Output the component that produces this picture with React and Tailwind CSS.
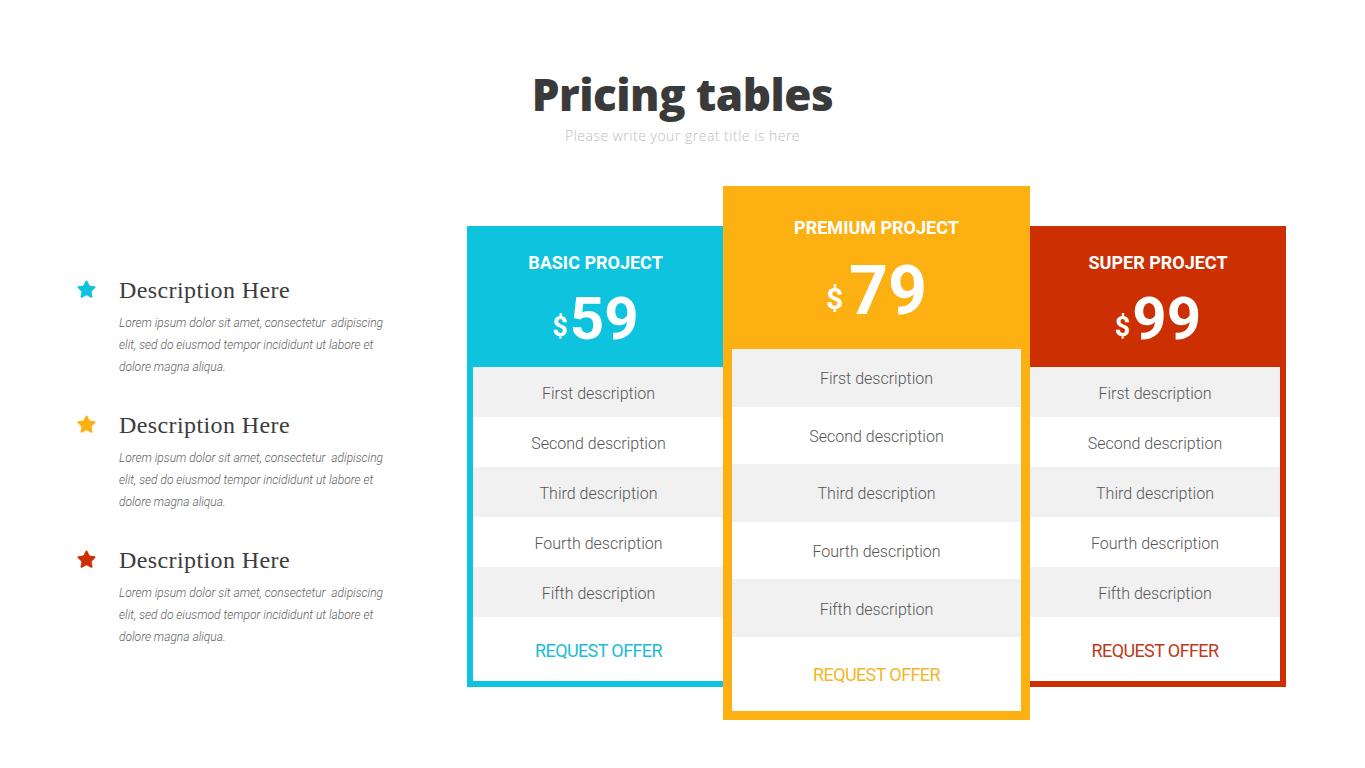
import React from "react";
import { Star } from "lucide-react";

const points = [
  { color: "#0ec3de" },
  { color: "#fdb012" },
  { color: "#cc2f02" },
];

const rows = ["First description", "Second description", "Third description", "Fourth description", "Fifth description"];

const Feature = ({ color }) => (
  <div className="flex items-start">
    <Star className="w-[21px] h-[21px] mt-[1px]" style={{ color, fill: color }} strokeWidth={1} />
    <div className="ml-[22px]">
      <h3 className="text-[24px] leading-[24px] text-[#3c3c3c] font-['Liberation_Serif',serif] tracking-[0.4px]">
        Description Here
      </h3>
      <p className="mt-[10px] text-[12px] leading-[22px] italic font-light text-[#5e5e5e] font-['Roboto',sans-serif]">
        Lorem ipsum dolor sit amet, consectetur&nbsp; adipiscing
        <br />
        elit, sed do eiusmod tempor incididunt ut labore et
        <br />
        dolore magna aliqua.
      </p>
    </div>
  </div>
);

export default function App() {
  return (
    <div className="w-[1365px] h-[768px] bg-white overflow-hidden font-['Roboto',sans-serif]">
      {/* Heading */}
      <div className="pt-[66px] text-center">
        <h1 className="text-[44px] leading-[56px] font-extrabold text-[#3a3a3a] font-['Open_Sans',sans-serif] tracking-[-0.5px]">
          Pricing tables
        </h1>
        <p className="mt-[5px] text-[14px] leading-[18px] font-light text-[#bdbdbd] font-['Open_Sans',sans-serif] tracking-[0.5px]">
          Please write your great title is here
        </p>
      </div>

      <div className="flex mt-[41px]">
        {/* Left features */}
        <div className="w-[467px] pl-[76px] pt-[92px] flex flex-col gap-[35px]">
          {points.map((p, i) => (
            <Feature key={i} color={p.color} />
          ))}
        </div>

        {/* Basic */}
        <div className="w-[257px] mt-[40px] h-[461px] bg-[#0ec3de] pl-[6px] pb-[6px] flex flex-col">
          <div className="h-[141px] flex flex-col items-center text-white -ml-[6px]">
            <div className="mt-[26px] text-[18px] leading-[22px] font-bold">BASIC PROJECT</div>
            <div className="mt-[15px] flex items-end font-bold">
              <span className="text-[27px] leading-[27px] mb-[8px] mr-[2px]">$</span>
              <span className="text-[60px] leading-[60px]">59</span>
            </div>
          </div>
          {rows.map((r, i) => (
            <div
              key={r}
              className={`h-[50px] pt-[3px] flex items-center justify-center text-[16px] font-light text-[#555] ${i % 2 === 0 ? "bg-[#f1f1f1]" : "bg-white"}`}
            >
              {r}
            </div>
          ))}
          <div className="flex-1 pt-[2px] bg-white flex items-center justify-center text-[18px] text-[#1cbcd6] tracking-[-0.6px]">
            REQUEST OFFER
          </div>
        </div>

        {/* Premium */}
        <div className="w-[307px] h-[534px] bg-[#fdb012] px-[9px] pb-[9px] -ml-[1px] flex flex-col">
          <div className="h-[163px] flex flex-col items-center text-white">
            <div className="mt-[31px] text-[18px] leading-[22px] font-bold">PREMIUM PROJECT</div>
            <div className="mt-[18px] flex items-end font-bold">
              <span className="text-[30px] leading-[30px] mb-[11px] mr-[6px]">$</span>
              <span className="text-[68px] leading-[68px]">79</span>
            </div>
          </div>
          {rows.map((r, i) => (
            <div
              key={r}
              className={`h-[57.6px] pt-[3px] flex items-center justify-center text-[16px] font-light text-[#555] ${i % 2 === 0 ? "bg-[#f1f1f1]" : "bg-white"}`}
            >
              {r}
            </div>
          ))}
          <div className="flex-1 pt-[2px] bg-white flex items-center justify-center text-[18px] text-[#f2b62a] tracking-[-0.6px]">
            REQUEST OFFER
          </div>
        </div>

        {/* Super */}
        <div className="w-[256px] mt-[40px] h-[461px] bg-[#cc2f02] pr-[6px] pb-[6px] flex flex-col">
          <div className="h-[141px] flex flex-col items-center text-white -mr-[6px]">
            <div className="mt-[26px] text-[18px] leading-[22px] font-bold">SUPER PROJECT</div>
            <div className="mt-[15px] flex items-end font-bold">
              <span className="text-[27px] leading-[27px] mb-[8px] mr-[2px]">$</span>
              <span className="text-[60px] leading-[60px]">99</span>
            </div>
          </div>
          {rows.map((r, i) => (
            <div
              key={r}
              className={`h-[50px] pt-[3px] flex items-center justify-center text-[16px] font-light text-[#555] ${i % 2 === 0 ? "bg-[#f1f1f1]" : "bg-white"}`}
            >
              {r}
            </div>
          ))}
          <div className="flex-1 pt-[2px] bg-white flex items-center justify-center text-[18px] text-[#c0391a] tracking-[-0.6px]">
            REQUEST OFFER
          </div>
        </div>
      </div>
    </div>
  );
}
